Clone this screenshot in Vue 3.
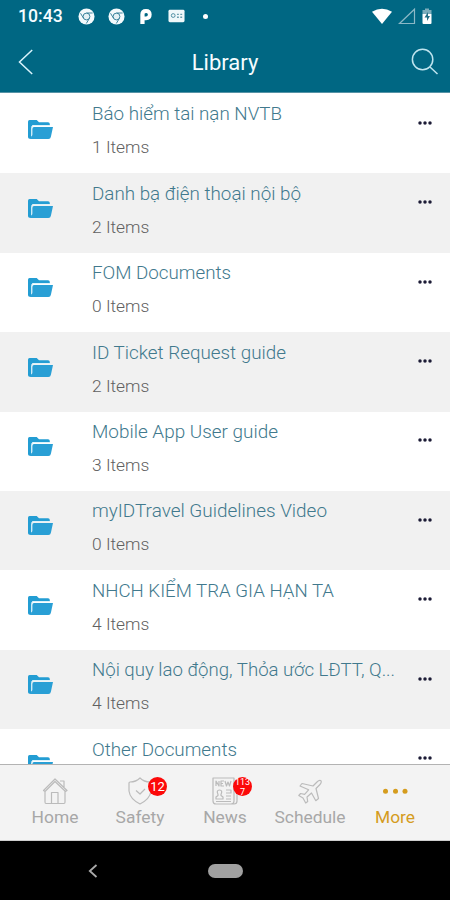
<script setup>
const rows = [
  ['Báo hiểm tai nạn NVTB', 1, 190],
  ['Danh bạ điện thoại nội bộ', 2, 209],
  ['FOM Documents', 0, 139],
  ['ID Ticket Request guide', 2, 194],
  ['Mobile App User guide', 3, 186],
  ['myIDTravel Guidelines Video', 0, 235],
  ['NHCH KIỂM TRA GIA HẠN TA', 4, 242],
  ['Nội quy lao động, Thỏa ước LĐTT, Q...', 4, 303],
  ['Other Documents', 1, 145],
]
const tabs = ['Home', 'Safety', 'News', 'Schedule', 'More']
</script>

<template>
  <div class="phone">
    <header>
      <div class="status">
        <span class="time">10:43</span>
        <svg v-for="n in 2" :key="n" class="chrome" viewBox="0 0 18 18">
          <circle cx="9" cy="9" r="8.5" fill="#f4fafc" />
          <circle cx="9" cy="9" r="3.6" fill="#e4f1f5" stroke="#347f99" stroke-width="1" />
          <path d="M9 5.3h6.5M5.8 10.8 2.7 5.6M12 11l-3.2 5.4" stroke="#347f99" fill="none" />
        </svg>
        <svg class="parking" viewBox="0 0 14 18">
          <path fill-rule="evenodd" d="M1 7Q1 1 7 1t6 6-6 6H5.5v4H1ZM5.5 9H7q2 0 2-2T7 5.2 5.5 7Z" fill="#fff" />
        </svg>
        <svg class="card" viewBox="0 0 18 14">
          <rect x=".5" y=".5" width="17" height="13" rx="1.5" fill="#eff8fa" />
          <circle cx="5.5" cy="6.5" r="2" fill="none" stroke="#47899e" />
          <path d="M9.5 4.5h2v1.5h-2zM13 4.5h2v1.5h-2zM9.5 7.5h2V9h-2zM13 7.5h2V9h-2z" fill="#689eae" />
        </svg>
        <i class="notice"></i>
        <svg class="signals" viewBox="0 0 64 20">
          <path d="M1 4.8Q11 -1.2 21 4.8L11 17Z" fill="#fff" />
          <path d="M28.5 16.5H43.5V2.2Z" fill="none" stroke="#8bb8c6" stroke-width="1.2" />
          <path d="M51.5 3h2.5V1.5h4V3h2.5v4h-9z" fill="#7badbc" />
          <path d="M51.5 7h9v9q0 1-1 1h-7q-1 0-1-1z" fill="#fff" />
          <path d="m57 5-3.5 5.5h2.5V14l3-5h-2z" fill="#246f85" />
        </svg>
      </div>
      <div class="heading">
        <svg class="back" viewBox="0 0 16 26"><path d="M14.2 1 1.5 13l12.7 12" /></svg>
        <h1>Library</h1>
        <svg class="search" viewBox="0 0 28 28"><circle cx="11.6" cy="11.5" r="10.2" /><path d="m19 19 7.5 7" /></svg>
      </div>
    </header>
    <main>
      <article v-for="[name, count, width] in rows" :key="name" class="row">
        <svg class="folder" viewBox="0 0 25 20">
          <path d="M1.5 0h7.2l2.3 2.2h9q1.8 0 1.8 1.8V5H5.5Q3.7 5 3.7 7v11.7H1.5Q0 18.7 0 17V1.8Q0 0 1.5 0Z" fill="#239dd3" />
          <path d="M6 7h19l-2.1 9.7q-.4 2.2-2.5 2.2H1.7Q4 18 4.3 14.5V9Q4.3 7 6 7Z" fill="#299fd5" />
          <path d="M3.6 16V7.5Q3.6 5.6 5.5 5.6H22" fill="none" stroke="#d9f1fa" />
        </svg>
        <div class="copy">
          <svg class="title" height="28" width="310"><text x="0" y="19" :textLength="width" lengthAdjust="spacingAndGlyphs">{{ name }}</text></svg>
          <p>{{ count }} Items</p>
        </div>
        <svg class="dots" viewBox="0 0 14 4"><circle v-for="x in [2, 7, 12]" :key="x" :cx="x" cy="2" r="1.75" /></svg>
      </article>
    </main>
    <nav class="tabs">
      <div v-for="tab in tabs" :key="tab" class="tab" :class="{ active: tab === 'More' }">
        <div class="icon">
          <svg v-if="tab === 'Home'" viewBox="0 0 28 28"><path d="M4 14v11q0 1.5 1 1.5h5.5V15.5H17v11h6q1 0 1-1.5V14M2.5 13.5 14 2l12 11.5-1.5 1L14 4.5 4 14.5ZM19 4h4v6M10.5 26.5H17" /></svg>
          <svg v-else-if="tab === 'Safety'" viewBox="0 0 28 28"><path d="M14 1q-4 4-10 4-1 0-1 1v8q1 8 11 13 10-5 11-13V6q0-1-1-1-6 0-10-4ZM10 13.5l4 3.5 5-5" /></svg>
          <svg v-else-if="tab === 'News'" viewBox="0 0 28 28"><path d="M5 1h18v23q0 3-3 3H5q-3 0-3-3V1ZM23 12h3v12q0 3-3 3h-3M5 9V4l3 5V4m5 0h-3v5h3m-3-2.5h2M14 4l1.5 5L17 5l1.5 4L20 4M5 22h7v-2l-2-1.5v-1q2-4.5-1.5-4.5T7 17.5v1L5 20ZM15 13h5v3h-5m0 3h5m-5 3h5M5 24.5h15" /></svg>
          <svg v-else-if="tab === 'Schedule'" viewBox="0 0 28 28"><path d="m17 9 4-4q2.5-2.5 4-1.2Q26 5 23.5 8L20 11.5l2.5 10-2.7 2.2-4.3-7.7-4.5 4 .7 4.5-2 1.5L7 21l-4.2-2.5 1.8-2 4 .8 4-4.5L4 9l2-2.5Z" /></svg>
          <svg v-else class="more-icon" viewBox="0 0 28 28"><circle v-for="x in [4.5, 14.5, 24]" :key="x" :cx="x" cy="14.2" r="2.5" /></svg>
          <span v-if="tab === 'Safety'" class="badge">12</span>
          <span v-if="tab === 'News'" class="badge overflow"><span>113</span><span>7</span></span>
        </div>
        <span class="label">{{ tab }}</span>
      </div>
    </nav>
    <footer>
      <svg class="android-back" viewBox="0 0 10 14"><path d="M8.5 1 1.8 7l6.7 6" /></svg>
      <i class="pill"></i>
    </footer>
  </div>
</template>

<style>
body { margin: 0; }
</style>
<style scoped>
* { box-sizing: border-box; }
.phone { width: 450px; height: 900px; overflow: hidden; display: flex; flex-direction: column; background: #fff; font-family: Roboto, sans-serif; }
header { height: 93px; flex: none; background: #006783; color: #f4fcff; border-bottom: 1px solid #5693a6; }
.status { height: 32px; display: flex; align-items: center; padding-left: 18px; }
.time { width: 60px; font-size: 17.6px; line-height: 32px; font-weight: 500; }
.chrome { width: 17px; height: 17px; margin-right: 13px; }
.parking { width: 14px; height: 17px; margin: 0 15px 0 1px; }
.card { width: 17px; height: 14px; }
.notice { width: 5px; height: 5px; border-radius: 50%; background: #fff; margin-left: 18px; }
.signals { width: 64px; height: 20px; margin-left: auto; margin-right: 15px; margin-top: 1px; }
.heading { height: 60px; display: grid; grid-template-columns: 80px 1fr 80px; align-items: center; }
.back { width: 16px; height: 26px; margin-left: 18px; fill: none; stroke: #d9f4fc; stroke-width: 1.5; }
h1 { margin: 0; padding-top: 2px; text-align: center; font-size: 22px; line-height: 30px; font-weight: 400; }
.search { width: 28px; height: 28px; margin-left: 41px; fill: none; stroke: #bfe5ef; stroke-width: 1.5; }
main { height: 671px; overflow: hidden; padding-top: 1px; }
.row { height: 79.4px; display: grid; grid-template-columns: 64px 316px 20px; padding-left: 28px; }
.row:nth-child(even) { background: #f1f1f1; }
.folder { width: 25px; height: 20px; margin-top: 25.5px; }
.title { display: block; margin-top: 7.4px; fill: #41798d; font-size: 19px; font-weight: 300; overflow: visible; }
.copy p { margin: 6px 0 0; color: #606060; font-size: 17.4px; line-height: 24px; font-weight: 300; }
.dots { width: 14px; height: 4px; margin: 26.8px 0 0 10px; fill: #1c1b35; }
.tabs { height: 77px; flex: none; display: grid; grid-template-columns: repeat(5, 85px); justify-content: center; background: #f3f3f3; border-top: 1px solid #b3b3b3; border-bottom: 1px solid #cecece; }
.tab { display: flex; flex-direction: column; align-items: center; padding-top: 12px; color: #a7a7a7; }
.icon { width: 28px; height: 28px; position: relative; }
.icon svg { width: 28px; height: 28px; fill: none; stroke: #bbb; stroke-width: 1.2; stroke-linejoin: round; }
.label { font-size: 17.4px; line-height: 23px; margin-top: 1px; }
.active { color: #d59c1d; }
.icon .more-icon { fill: #d59c1d; stroke: none; }
.badge { position: absolute; left: 22px; top: 0; width: 19px; height: 19px; border-radius: 50%; background: #fc0909; color: #fff; text-align: center; font-size: 13px; line-height: 19px; }
.badge.overflow { display: flex; flex-direction: column; align-items: center; font-size: 9px; line-height: 10px; }
footer { height: 59px; background: #000; display: flex; align-items: center; padding-left: 88px; }
.android-back { width: 10px; height: 14px; fill: none; stroke: #aaa; stroke-width: 1.8; }
.pill { width: 35px; height: 14px; border-radius: 7px; background: #a0a0a0; margin-left: 110px; }
</style>
